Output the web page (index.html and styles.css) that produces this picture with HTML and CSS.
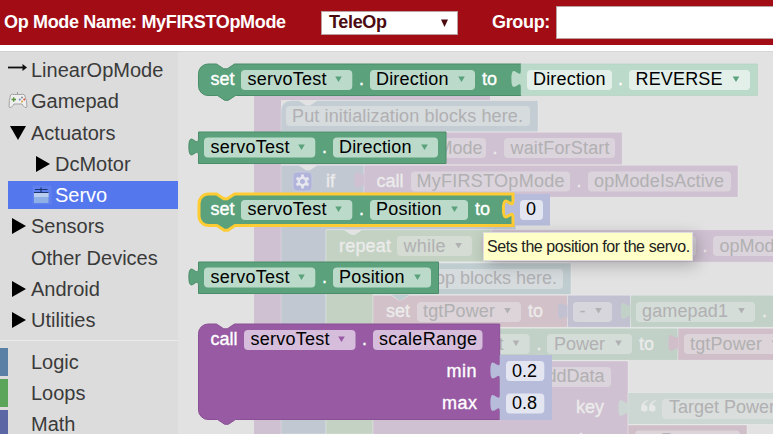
FILE: index.html
```html
<!DOCTYPE html>
<html lang="en">
<head>
<meta charset="utf-8">
<title>MyFIRSTOpMode</title>
<link rel="stylesheet" href="styles.css">
</head>
<body>
<header class="bar">
  <span class="name">Op Mode Name: MyFIRSTOpMode</span>
  <div class="select"><span>TeleOp</span><svg width="9" height="8"><path d="M1 .5h7L4.500 8z"/></svg></div>
  <span class="group">Group:</span>
  <div class="input"></div>
</header>
<main class="editor">
  <nav class="toolbox">
    <div class="row"><svg class="icon" width="20" height="20"><path d="M0 7.500h17" stroke="#111" stroke-width="1.800"/><path d="M14.500 4l4.500 3.500-4.500 3.500z" fill="#111"/></svg>LinearOpMode</div>
    <div class="row"><svg class="icon" width="20" height="20" viewBox="0 0 20 20"><path d="M9.500 5V1" stroke="#999"/><path d="M2.500 4Q4 2.500 6 3.500h7q2-1 3.500.5Q19 9 19 16q-2 2-4-1.500l-1-1.500H6l-1 1.500q-2 3.500-4 1.500Q1 9 2.500 4z" fill="#efefef" stroke="#a3a3a3"/><path d="M3.500 8.500h4.500M5.700 6.300v4.500" stroke="#58903c" stroke-width="1.300"/><circle cx="14" cy="6.500" r="1" fill="#888"/><circle cx="16.300" cy="8.500" r="1" fill="#d94a36"/><circle cx="11.800" cy="8.500" r="1" fill="#6a8bc0"/><circle cx="14" cy="10.500" r="1" fill="#d5a63b"/></svg>Gamepad</div>
    <div class="row"><svg class="icon" width="20" height="20"><path d="M2 3h16l-8 14z"/></svg>Actuators</div>
    <div class="row sub"><svg class="icon" width="20" height="20"><path d="M4 2v16l14-8z"/></svg>DcMotor</div>
    <div class="row sub selected"><svg class="icon" width="20" height="20"><path d="M.5.5h19v19H.5z" fill="#6080ee"/><path d="M2 7h14.500v11H2z" fill="#8fb0e6"/><path d="M2 7h14.500v5H2z" fill="#b9cdf0"/><path d="M3 4.500h12.500M9 2.500v5M2 7.500h14.500" stroke="#1b3570" stroke-width="1.200"/></svg>Servo</div>
    <div class="row"><svg class="icon" width="20" height="20"><path d="M4 2v16l14-8z"/></svg>Sensors</div>
    <div class="row"><span class="icon"></span>Other Devices</div>
    <div class="row"><svg class="icon" width="20" height="20"><path d="M4 2v16l14-8z"/></svg>Android</div>
    <div class="row"><svg class="icon" width="20" height="20"><path d="M4 2v16l14-8z"/></svg>Utilities</div>
    <hr>
    <div class="row logic"><span class="icon"></span>Logic</div>
    <div class="row loops"><span class="icon"></span>Loops</div>
    <div class="row math"><span class="icon"></span>Math</div>
  </nav>
  <div class="canvas">
  <svg class="blocks" width="595" height="383" viewBox="178 51 595 383">
    <defs>
      <path id="dd" d="M-3.300-2.500h6.600L0 3z"/>
      <path id="plug" d="M0 24c0-12-9.600 9.600-9.600-9s9.600 3 9.600-9z"/>
    </defs>

    <!-- program in the workspace, dimmed behind the flyout -->
    <g class="dim">
      <path class="d-purple" d="M254 70h236v30H281v334h-27z"/>
      <path class="d-slate edge" d="M281 110a9.600 9.600 0 0 1 9.600-9.600h8.400l7.200 4.800h3.600l7.200-4.800H538v31.300H281z"/>
      <rect class="d-slatef" x="286" y="106" width="244" height="20" rx="4"/>
      <path class="d-purple edge" d="M281 132.300h341.300v32.400H281z"/>
      <rect class="d-purplef" x="390" y="138" width="96" height="20" rx="4"/>
      <rect class="d-purplef" x="504" y="138" width="111" height="20" rx="4"/>
      <path class="d-blue edge" d="M281 165.300h18l7.200 4.800h3.600l7.200-4.800H364v32h152v32.500H326V434h-45z"/>
      <path class="d-purple edge" d="M364 165.300h374v32H364z"/>
      <use href="#plug" x="364" y="165" class="d-purple"/>
      <rect class="d-purplef" x="411" y="171.500" width="159" height="20" rx="4"/>
      <rect class="d-purplef" x="588" y="171.500" width="143" height="20" rx="4"/>
      <rect x="293" y="172" width="19" height="19" rx="4" fill="#b1b4da" stroke="#c6c9de"/>
      <g transform="translate(302.500 181.500)" fill="none" stroke="#e6e6ee"><circle r="3.800" stroke-width="2.400"/><path d="M0-7v3M0 7v-3M-6-3.500l2.500 1.500M6-3.500l-2.500 1.500M-6 3.500l2.500-1.500M6 3.500l-2.500-1.500" stroke-width="2.800"/></g>
      <path class="d-green edge" d="M326 229.700h18l7.200 4.800h3.600l7.200-4.800H491v32H373V434h-47z"/>
      <rect class="d-greenf" x="397" y="236" width="75" height="20" rx="4"/>
      <path class="d-purple edge" d="M491 229.700h290v32.500H491z"/>
      <use href="#plug" x="491" y="230" class="d-purple"/>
      <rect class="d-purplef" x="540" y="236" width="156" height="20" rx="4"/>
      <rect class="d-purplef" x="713" y="236" width="80" height="20" rx="4"/>
      <path class="d-teal edge" d="M373 263h198v31.500H373z"/>
      <rect class="d-slatef" x="378" y="269" width="185" height="20" rx="4"/>
      <path class="d-pink edge" d="M373 295.300h18l7.200 4.800h3.600l7.200-4.800h158.500v32H373z"/>
      <path d="M391 294.500h18.500l-7.500 5.500h-3.600z" class="d-teal"/>
      <rect class="d-pinkf" x="417" y="302" width="104" height="20" rx="4"/>
      <path class="d-violet edge" d="M567.500 295.300h63v32h-63z"/>
      <use href="#plug" x="567.500" y="296" class="d-violet"/>
      <rect class="d-violetf" x="573" y="302" width="39" height="20" rx="4"/>
      <path class="d-mint edge" d="M630.500 295.300h150v32h-150z"/>
      <use href="#plug" x="630.500" y="296" class="d-mint"/>
      <rect class="d-mintf" x="636" y="302" width="119" height="20" rx="4"/>
      <path class="d-mint edge" d="M373 328.300h305v32H373z"/>
      <rect class="d-mintf" x="420" y="334" width="109.500" height="20" rx="4"/>
      <rect class="d-mintf" x="547" y="334" width="85" height="20" rx="4"/>
      <path class="d-rose edge" d="M678 328.300h100v32H678z"/>
      <use href="#plug" x="678" y="328" class="d-rose"/>
      <rect class="d-pinkf" x="684" y="334" width="100" height="20" rx="4"/>
      <path class="d-purple edge" d="M373 361h255v80H373z"/>
      <rect class="d-purplef" x="530" y="367" width="81" height="20" rx="4"/>
      <path class="d-text edge" d="M628 392.500h150v32H628z"/>
      <use href="#plug" x="628" y="393" class="d-text"/>
      <rect fill="#dadedc" x="662" y="399" width="120" height="20" rx="4"/>
      <path class="d-rose edge" d="M628 425h119v20H628z"/>
      <rect class="d-pinkf" x="635" y="430.500" width="105" height="20" rx="4"/>
      <g class="dt">
        <text x="292" y="122" textLength="231">Put initialization blocks here.</text>
        <text x="482.500" y="154" text-anchor="end">OpMode</text>
        <text x="510.500" y="154" textLength="99">waitForStart</text>
        <text x="416.500" y="187" textLength="148">MyFIRSTOpMode</text>
        <text x="594" y="187" textLength="130">opModeIsActive</text>
        <text x="403.500" y="252" textLength="42">while</text>
        <text x="719.500" y="252">opModeIsActive</text>
        <text x="557" y="284" text-anchor="end">Put loop blocks here.</text>
        <text x="423" y="317" textLength="72">tgtPower</text>
        <text x="579.500" y="317">-</text>
        <text x="642" y="317" textLength="86">gamepad1</text>
        <text x="503.500" y="349.500" text-anchor="end">servoTest</text>
        <text x="554" y="349.500" textLength="51">Power</text>
        <text x="690" y="349.500" textLength="72">tgtPower</text>
        <text x="604.500" y="382" text-anchor="end">addData</text>
        <text x="669" y="413">Target Power</text>
        <text x="641" y="446">tgtPower</text>
        <use href="#dd" x="458.500" y="245.500"/><use href="#dd" x="507.500" y="310.500"/><use href="#dd" x="598.500" y="310.500"/><use href="#dd" x="741.500" y="310.500"/><use href="#dd" x="516" y="343"/><use href="#dd" x="618.500" y="343"/><use href="#dd" x="775" y="343"/>
      </g>
      <g class="dw">
        <text x="492.500" y="154">.</text>
        <text x="326" y="187">if</text>
        <text x="376.500" y="187" textLength="27">call</text>
        <text x="576.500" y="187">.</text>
        <text x="339" y="252" textLength="52">repeat</text>
        <text x="702.500" y="252">.</text>
        <text x="386" y="317">set</text>
        <text x="528" y="317">to</text>
        <text x="762" y="317">.</text>
        <text x="536.500" y="349.500">.</text>
        <text x="639" y="349.500">to</text>
        <text x="576" y="413">key</text>
        <text x="605" y="446" text-anchor="end">number</text>
      </g>
      <g fill="#e6e8e7"><path d="M648 400q-7 2-7 8a3.300 3.300 0 1 0 3-3q1-3 4-4zM656 400q-7 2-7 8a3.300 3.300 0 1 0 3-3q1-3 4-4z"/></g>
    </g>

    <!-- set servoTest.Direction -->
    <path class="green rim" d="M198.500 73.600a9.600 9.600 0 0 1 9.600-9.600h8.400l7.200 4.800h3.600l7.200-4.800H521v31.500H235.500l-7.200 4.800h-3.600l-7.200-4.800h-9.400a9.600 9.600 0 0 1-9.600-9.600z"/>
    <path class="mint-edge" d="M521 64h236.500v31.500H521z"/><use href="#plug" x="521" y="64" class="mint"/>
    <rect class="mint" x="241" y="70" width="111.300" height="20" rx="4"/><rect class="mint" x="370" y="70" width="105" height="20" rx="4"/>
    <rect class="pale" x="527" y="70" width="85" height="20" rx="4"/><rect class="pale" x="629" y="70" width="121" height="20" rx="4"/>
    <g class="gd"><use href="#dd" x="338.500" y="79"/><use href="#dd" x="461.500" y="79"/><use href="#dd" x="736" y="79"/></g>
    <g class="w"><text x="210.500" y="85">set</text><text x="359" y="85">.</text><text x="482" y="85">to</text><text x="618" y="85">.</text></g>
    <g class="k"><text x="247.500" y="85" textLength="79">servoTest</text><text x="376" y="85" textLength="72.500">Direction</text><text x="533" y="85" textLength="72.500">Direction</text><text x="635.500" y="85" textLength="87">REVERSE</text></g>

    <!-- servoTest.Direction -->
    <path class="green rim" d="M198.500 132H446v31.500H198.500V156c0-12-9.600 9.600-9.600-9s9.600 3 9.600-9z"/>
    <rect class="mint" x="204" y="137.500" width="111.300" height="20" rx="4"/><rect class="mint" x="333" y="137.500" width="105" height="20" rx="4"/>
    <g class="gd"><use href="#dd" x="301.500" y="147"/><use href="#dd" x="424.500" y="147"/></g>
    <g class="w"><text x="322" y="153">.</text></g>
    <g class="k"><text x="210.500" y="153" textLength="79">servoTest</text><text x="339" y="153" textLength="72.500">Direction</text></g>

    <!-- set servoTest.Position, selected -->
    <path fill="#b7bcda" d="M513 194h37v31.500h-37z"/>
    <path fill="#b7bcda" d="M500 200h15v20h-15z"/>
    <path class="green active" d="M199 203.600a9.600 9.600 0 0 1 9.600-9.600h7.900l7.200 4.800h3.600l7.200-4.800H513v6c0 12-9.600-9.600-9.600 9s9.600-3 9.600 9v7.500H235l-7.200 4.800h-3.600L217 225.500h-8.400a9.600 9.600 0 0 1-9.600-9.600z"/>
    <rect class="mint" x="241" y="200" width="111.300" height="20" rx="4"/><rect class="mint" x="370" y="200" width="98" height="20" rx="4"/><rect fill="#e3e5f0" x="520" y="200" width="23" height="20" rx="4"/>
    <g class="gd"><use href="#dd" x="338.500" y="209"/><use href="#dd" x="454.500" y="209"/></g>
    <g class="w"><text x="210.500" y="215">set</text><text x="359" y="215">.</text><text x="475" y="215">to</text></g>
    <g class="k"><text x="247.500" y="215" textLength="79">servoTest</text><text x="376" y="215" textLength="65.500">Position</text><text x="526" y="215">0</text></g>

    <!-- servoTest.Position -->
    <path class="green rim" d="M198.500 262h240v31.500h-240V286c0-12-9.600 9.600-9.600-9s9.600 3 9.600-9z"/>
    <rect class="mint" x="204" y="267.500" width="111.300" height="20" rx="4"/><rect class="mint" x="333" y="267.500" width="98" height="20" rx="4"/>
    <g class="gd"><use href="#dd" x="301.500" y="277"/><use href="#dd" x="417.500" y="277"/></g>
    <g class="w"><text x="322" y="283">.</text></g>
    <g class="k"><text x="210.500" y="283" textLength="79">servoTest</text><text x="339" y="283" textLength="65.500">Position</text></g>

    <!-- call servoTest.scaleRange -->
    <path class="purple rim" d="M198.500 333.600a9.600 9.600 0 0 1 9.600-9.600h8.400l7.200 4.800h3.600l7.200-4.800H499.700v95.500H235.500l-7.200 4.800h-3.600l-7.200-4.800h-9.400a9.600 9.600 0 0 1-9.600-9.600z"/>
    <g fill="#b7bcda"><path d="M499.700 355H552v65h-52.300z"/><use href="#plug" x="500" y="355.500"/><use href="#plug" x="500" y="388"/></g>
    <rect class="lilac" x="244" y="330" width="111.500" height="20" rx="4"/><rect class="lilac" x="373" y="330" width="109.500" height="20" rx="4"/>
    <rect fill="#e3e5f0" x="506" y="361" width="38.300" height="20" rx="4"/><rect fill="#e3e5f0" x="506" y="393.500" width="38.300" height="20" rx="4"/>
    <use href="#dd" x="341.500" y="339" fill="#995ba5"/>
    <g class="w"><text x="210.500" y="345" textLength="27">call</text><text x="362" y="345">.</text><text x="446.500" y="377" textLength="30">min</text><text x="442" y="409" textLength="35">max</text></g>
    <g class="k"><text x="250.500" y="345" textLength="79">servoTest</text><text x="379" y="345" textLength="98">scaleRange</text><text x="512" y="377">0.2</text><text x="512" y="409">0.8</text></g>
  </svg>
  <div class="tooltip">Sets the position for the servo.</div>
  </div>
</main>
</body>
</html>
```
FILE: styles.css
```css
* { box-sizing: border-box; }
body { margin: 0; width: 773px; height: 434px; overflow: hidden; background: #fff; font-family: "Liberation Sans", Arial, sans-serif; }

.bar { display: flex; align-items: center; height: 45px; padding-left: 4px; background: #a10c15; color: #fff; font-weight: bold; font-size: 18px; letter-spacing: -.33px; white-space: nowrap; overflow: hidden; }
.name { width: 317px; }
.select { display: flex; align-items: center; justify-content: space-between; width: 137px; height: 24px; padding: 0 8px 0 7px; background: #fff; border: 1px solid #b9a0a2; color: #4a0a10; }
.select svg { fill: #4a0a10; }
.group { width: 64px; margin-left: 34px; }
.input { flex: 1; height: 33px; margin-right: -4px; background: #fff; border: 1px solid #b9a0a2; }

.editor { display: flex; height: 383px; margin-top: 6px; }
.toolbox { width: 178px; flex: none; padding-top: 4px; background: #dcdcdc; border-top: 1px solid #d0d0d0; overflow: hidden; color: #3a3a3a; }
.row { display: flex; align-items: center; height: 28px; margin-bottom: 3.25px; border-left: 8px solid transparent; font-size: 20px; line-height: 28px; white-space: nowrap; }
.icon { flex: none; width: 20px; height: 20px; margin-right: 3px; }
.sub { padding-left: 24px; }
.selected { background: #5577ee; background-clip: padding-box; color: #fff; }
.toolbox hr { height: 1px; margin: 5.5px 0 7px; border: 0; background: #eaeaea; }
.logic { border-color: #5b80a5; }
.loops { border-color: #5ba55b; }
.math { border-color: #5b67a5; }

.canvas { position: relative; flex: 1; background: #e2e2e2; border-top: 1px solid #d6d6d6; }
.blocks { display: block; margin-top: -1px; font-size: 18px; }
.green { fill: #5ba27c; }
.purple { fill: #975aa3; }
.rim { stroke: #4b8c69; stroke-width: 1; }
.purple.rim { stroke: #8a5095; }
.active { stroke: #fc3; stroke-width: 3; }
.mint { fill: #bbdaca; }
.mint-edge { fill: #bbdaca; stroke: #b0d0c0; stroke-width: .6; }
.pale { fill: #e3f0e9; }
.lilac { fill: #d5bddb; }
.gd { fill: #5ba27c; }
.w { fill: #fff; stroke: #fff; stroke-width: .35; }
.k { fill: #000; }

.edge { stroke: #fff; stroke-opacity: .25; }
.d-purple { fill: #cfc1d1; }
.d-purplef { fill: #dbd4dc; }
.d-slate { fill: #c4cdd3; }
.d-slatef { fill: #d6dbde; }
.d-blue { fill: #c1c8d2; }
.d-green { fill: #c3d2c2; }
.d-greenf { fill: #d4dcd4; }
.d-teal { fill: #c0cdd0; }
.d-pink { fill: #d2c1c8; }
.d-rose { fill: #d0bfc9; }
.d-pinkf { fill: #dcd4d8; }
.d-violet { fill: #c2c1d2; }
.d-violetf { fill: #d7d6dd; }
.d-mint { fill: #c1d1c8; }
.d-mintf { fill: #d5ddd9; }
.d-text { fill: #ccd6d2; }
.dt { fill: #b1b0b2; }
.dw { fill: #ebebeb; stroke: #ebebeb; stroke-width: .35; }

.tooltip { position: absolute; left: 305px; top: 180px; width: 210px; height: 29px; padding-left: 3px; background: #ffffc7; border: 1px solid #ddd; box-shadow: 4px 4px 16px rgba(0, 0, 0, .25); font-size: 16px; line-height: 28px; letter-spacing: -.42px; color: #222; white-space: nowrap; }
```
